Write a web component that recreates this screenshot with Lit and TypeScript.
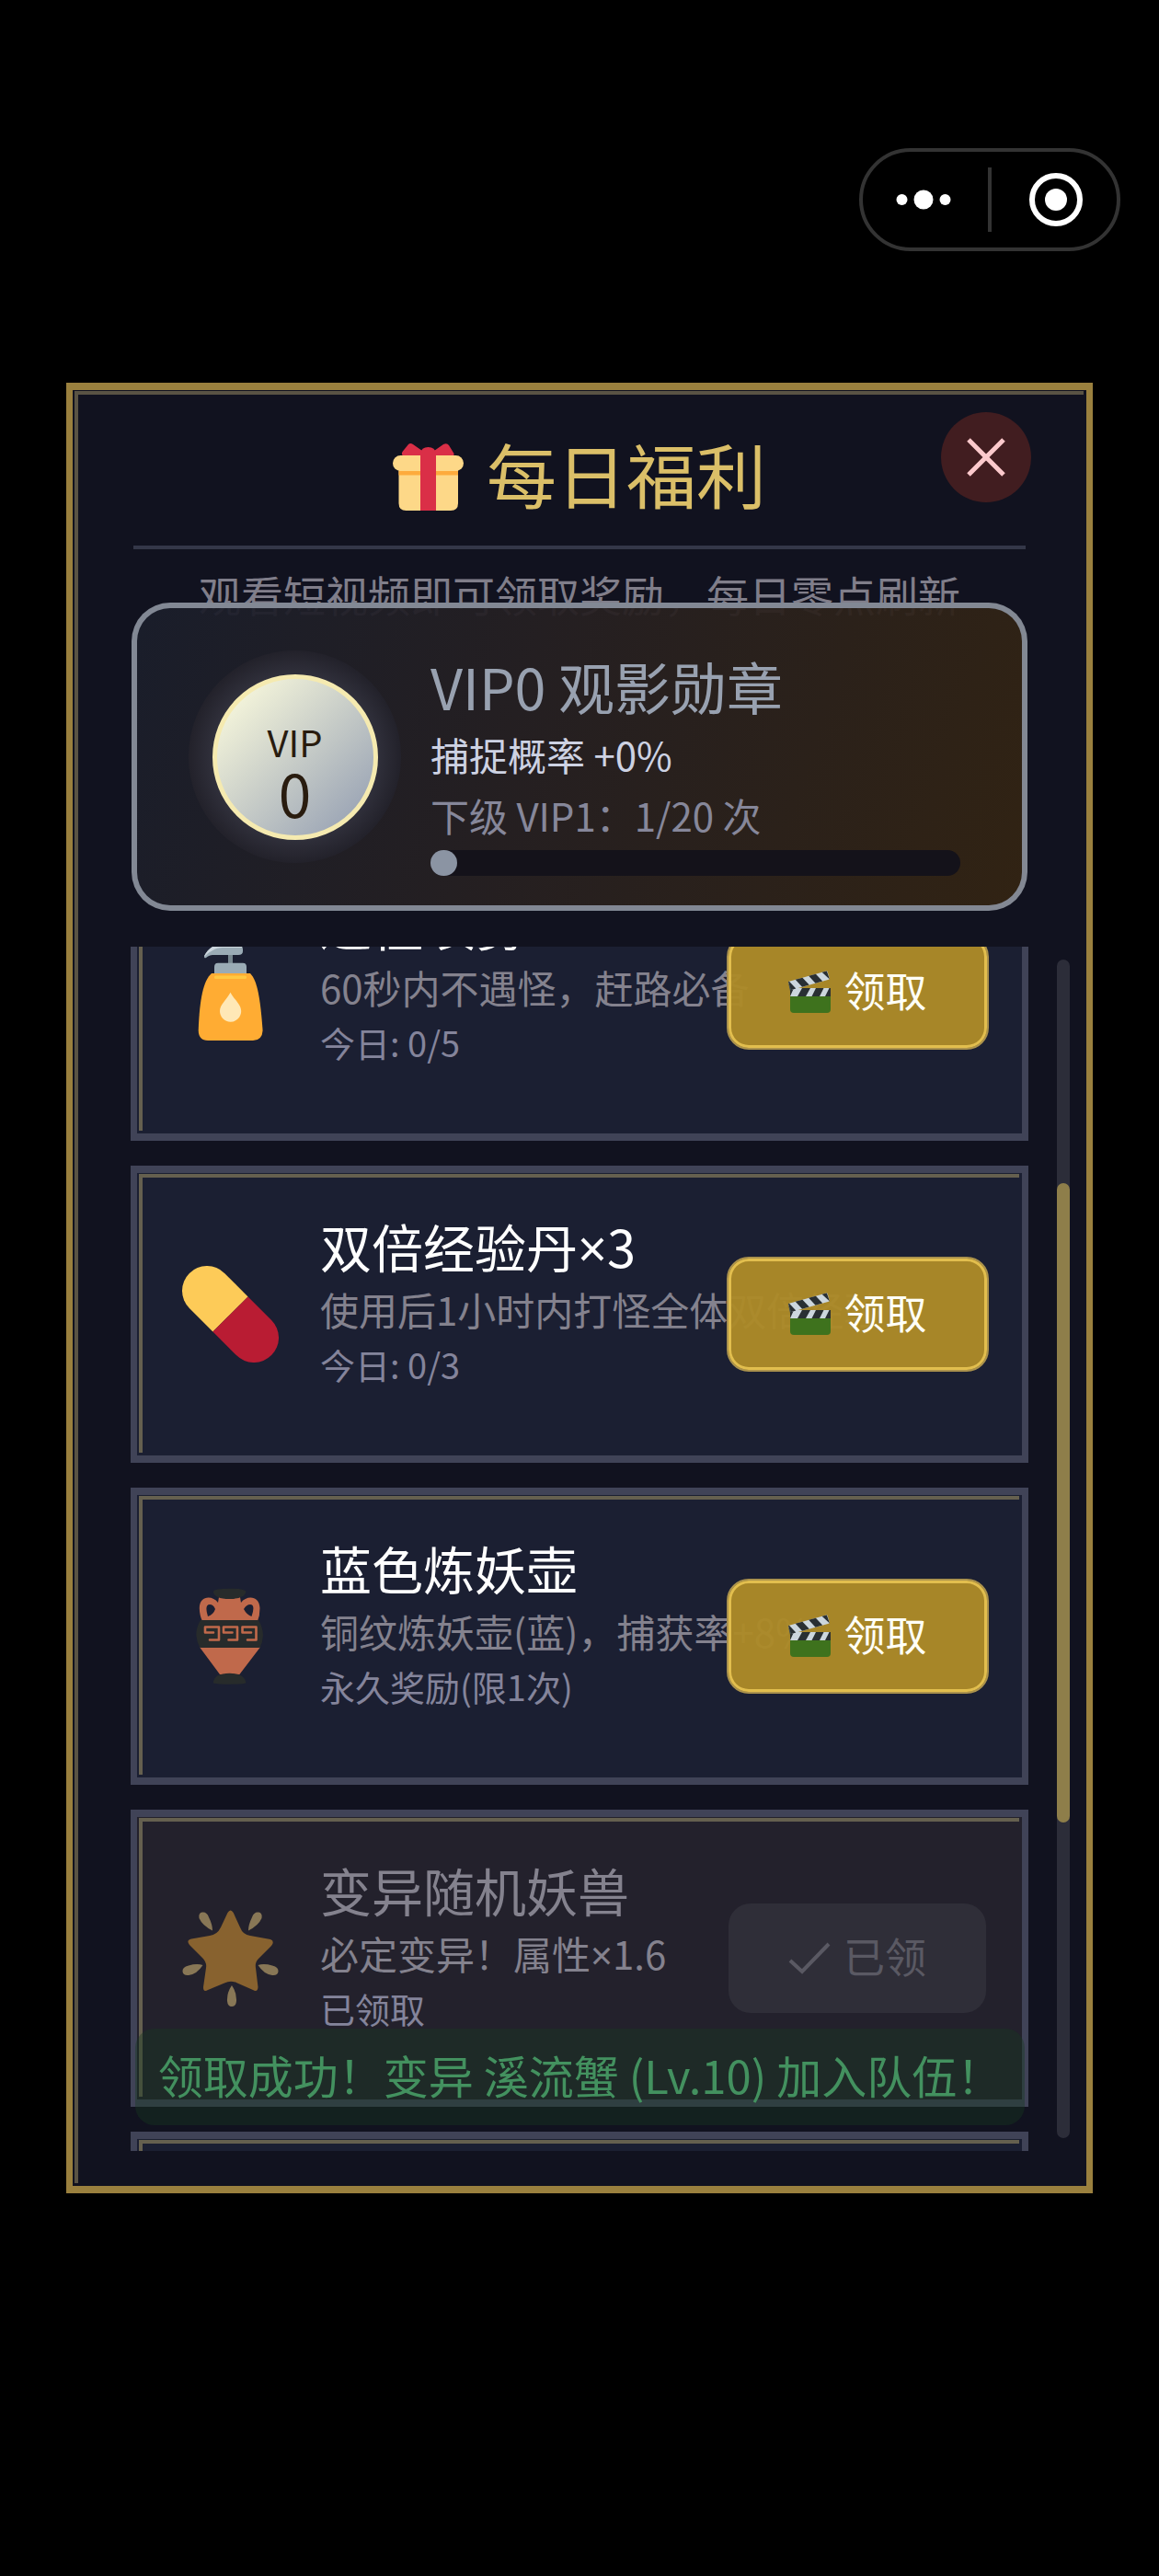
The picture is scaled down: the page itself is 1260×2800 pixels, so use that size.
import { LitElement, html, svg, css, nothing } from "lit";
import { customElement, state, query } from "lit/decorators.js";
import { classMap } from "lit/directives/class-map.js";
import { styleMap } from "lit/directives/style-map.js";

interface Reward {
  icon: unknown;
  name: string;
  desc: string;
  quota: string;
  claimed: boolean;
}

const giftIcon = html`<svg class="gift" viewBox="0 0 77 77" aria-hidden="true">
  <path d="M11 15 Q9 14 10.5 11 L17 3 Q19 1 22 3 L32 10 Q38.500 4 45 10 L55 3 Q59 1 61 4 L66.500 13 Q67 16 64 16 H12Z" fill="#da2f47" />
  <path d="M6.500 30 H71 V67 Q71 75 63 75 H14.500 Q6.500 75 6.500 67Z" fill="#fdd888" />
  <rect x="0" y="15" width="77" height="17" rx="8.500" fill="#fdd888" />
  <rect x="6.500" y="32" width="64.500" height="4.500" fill="#fdab3d" />
  <path d="M30 75 V13 Q31 6 38.500 6 Q46 6 47 13 V75Z" fill="#da2f47" />
</svg>`;

const clapIcon = html`<svg class="clap" viewBox="0 0 46 47" aria-hidden="true">
  <path d="M2 27 H46 V42 Q46 46 42 46 H6 Q2 46 2 42Z" fill="#3e721d" />
  <rect x="2" y="19" width="44" height="9" fill="#ccd6dd" />
  <path d="M2 19 H6 L2 28Z M15 19 H24 L19 28 H10Z M30 19 H38.500 L34 28 H25.500Z M44.500 19 H46 V28 H40Z" fill="#292f33" />
  <g transform="translate(0 12) rotate(-15.500)">
    <rect width="44" height="9.500" rx="1" fill="#ccd6dd" />
    <path d="M0 0 H1 L6 9.500 H0Z M8 0 H16 L21 9.500 H13Z M23 0 H31 L36 9.500 H28Z M38 0 H43.500 L44 9.500Z" fill="#292f33" />
  </g>
  <path d="M0 13 L3 20 L2 22Z" fill="#3b4a50" />
</svg>`;

const bottleArt = svg`
  <rect x="50" y="10" width="5" height="13" fill="#77878f" />
  <path d="M24 14 C28 5 35 0 45 0 H58 Q66 1 66 6 V8 Q66 12 61 12 H42 C35 12 30 11 26 15 Q24 16 24 14Z" fill="#9aabb5" />
  <path d="M24 13 C28 5 35 0 45 0 H58 Q64 1 65.500 4 H44 C36 4 29 9 24 14Z" fill="#ccd6dd" />
  <path d="M35 33 V25 Q35 20.700 39 20.700 H66 Q70 20.700 70 25 V33Z" fill="#9aabb5" />
  <path d="M32 32 H74 C82 40 85 60 87.600 94 Q87 105 77 105 H28 Q18 105 17.700 94 C19 60 23 40 32 32Z" fill="#ffac33" />
  <rect x="35" y="34.500" width="35" height="3.500" rx="1.500" fill="#ffc843" />
  <path d="M52.500 52.700 C57 61 64.200 66 64.200 73 A11.600 11.700 0 0 1 41 73 C41 66 48 61 52.500 52.700Z" fill="#ffe8b6" />`;

const pillArt = svg`
  <path d="M33.400 71.600 L7.900 46.100 A27 27 0 0 1 46.100 7.900 L71.600 33.400Z" fill="#fdcb58" />
  <path d="M71.600 33.400 L97.100 58.900 A27 27 0 0 1 58.900 97.100 L33.400 71.600Z" fill="#b91c33" />`;

const amphoraArt = svg`
  <path d="M40 10 H63 L64 16 C70 8 84 8 84.500 22 Q84.500 30 82 36 L84.500 65 L62.400 94 H41 L19.500 65 L22 36 Q19 30 18.800 22 C19 8 33 8 39 16Z" fill="#c0694b" />
  <path d="M28 31 Q24 18 30 18 Q34 18 36 23 Q34 29 28 31Z M75.500 31 Q80 18 74 18 Q70 18 67 23 Q70 29 75.500 31Z" fill="#1b1f32" />
  <path d="M33.800 4 Q35 .7 51.600 .7 Q68 .7 69.500 4 Q68 12 51.600 12 Q35 12 33.800 4Z" fill="#272b2b" />
  <path d="M20 35 H83 Q92 50 84.500 65 H19.500 Q11 50 20 35Z" fill="#272b2b" />
  <path d="M33.800 103 Q35 92.700 51.600 92.700 Q68 92.700 69.500 103 Q68 104.700 51.600 104.700 Q35 104.700 33.800 103Z" fill="#272b2b" />
  <g fill="none" stroke="#c0694b" stroke-width="2.600" stroke-linejoin="round" stroke-linecap="round">
    <path d="M30 56.500 H40 V42.500 H25 V48.500 H34" />
    <path d="M50.500 56.500 H60 V42.500 H45 V48.500 H54.500" />
    <path d="M71 56.500 H80.500 V42.500 H65.500 V48.500 H75" />
  </g>`;

const starArt = svg`
  <path d="M49.500 3 Q52.600 -2 55.700 3 L63 19 Q66 27 74 28 L96 32 Q101 34 97 39 L83 53 Q79 57 80 63 L82.500 84 Q82 90 77 87 L60 79.500 Q53 76 46 79.500 L28 87 Q23 90 23 84 L26 63 Q27 57 22 52 L8 38 Q4 33 10 31.500 L30 28 Q38 27 42 19Z" fill="#88622f" />
  <g fill="#887756">
    <path d="M33 22.500 Q22 17 18.500 9 Q17.500 3 22 2.500 Q27 2 29 8 Q33 16 33 22.500Z" />
    <path d="M72 22.500 Q83 17 86.500 9 Q87.500 3 83 2.500 Q78 2 76 8 Q72 16 72 22.500Z" />
    <path d="M22.500 60 Q16 70 7 71 Q1 71.500 .5 67 Q0 62 7 60.500 Q16 58 22.500 60Z" />
    <path d="M82.500 60 Q89 70 98 71 Q104 71.500 104.500 67 Q105 62 98 60.500 Q89 58 82.500 60Z" />
    <path d="M54 82 Q59.500 90 59 99 Q58.500 105 54 105 Q49.500 105 49 99 Q48.500 90 54 82Z" />
  </g>`;

@customElement("app-root")
export class AppRoot extends LitElement {
  static styles = css`
    :host {
      display: block;
      background: #000;
      font-family: "Noto Sans CJK SC", sans-serif;
    }
    * {
      box-sizing: border-box;
    }
    h1, h2, h3, p, ul {
      margin: 0;
      padding: 0;
      font-weight: 400;
      list-style: none;
    }
    button {
      margin: 0;
      padding: 0;
      border: 0;
      background: none;
      color: inherit;
      font: inherit;
      cursor: pointer;
    }
    svg {
      display: block;
    }
    .page {
      display: flex;
      flex-direction: column;
      height: 100vh;
      min-height: 1600px;
      padding: 161px 0 416px;
    }
    .capsule {
      display: flex;
      align-self: flex-end;
      align-items: center;
      margin-right: 42px;
      border: 4px solid #333;
      border-radius: 56px;
    }
    .capsule button {
      display: grid;
      place-items: center;
      width: 136px;
      height: 104px;
    }
    .capsule .more {
      padding-right: 4px;
    }
    .capsule .exit {
      padding-left: 4px;
    }
    .capsule .rule {
      width: 4px;
      height: 70px;
      background: #333;
    }
    .panel {
      position: relative;
      display: flex;
      flex: 1;
      flex-direction: column;
      min-height: 0;
      margin: 143px 72px 0;
      border: solid #9a803e;
      border-width: 8px 7px;
      background: #11121f;
    }
    .panel::before {
      content: "";
      position: absolute;
      inset: 1px 3px 3px 2px;
      border: solid #595344;
      border-width: 4px 0 0 4px;
      pointer-events: none;
    }
    .head {
      display: flex;
      align-items: center;
      justify-content: center;
      gap: 25px;
      margin: 0 66px;
      padding: 34px 0 15px;
      border-bottom: 4px solid #343748;
    }
    .gift {
      width: 77px;
      height: 77px;
    }
    .head h1 {
      color: #dbbf68;
      font-size: 76px;
      line-height: 112px;
      padding-bottom: 8px;
    }
    .close {
      position: absolute;
      top: 24px;
      right: 60px;
      display: grid;
      place-items: center;
      width: 98px;
      height: 98px;
      border-radius: 50%;
      background: #411d20;
    }
    .hint {
      margin-top: 18px;
      color: #807e8a;
      font-size: 46px;
      line-height: 60px;
      text-align: center;
      white-space: nowrap;
    }
    .vip {
      position: relative;
      display: flex;
      align-items: flex-start;
      gap: 32px;
      margin: -20px 64px 0;
      padding: 44px 67px 32px 56px;
      border: 6px solid rgba(134, 141, 153, 0.96);
      border-radius: 42px;
      background: linear-gradient(109deg, rgba(26, 30, 44, 0.94), rgba(38, 32, 34, 0.94) 45%, rgba(51, 36, 19, 0.94)) border-box;
    }
    .halo {
      display: grid;
      place-items: center;
      flex: none;
      width: 231px;
      height: 231px;
      margin-top: 2px;
      border-radius: 50%;
      background: radial-gradient(circle, #343440 50%, #23222b 70%);
    }
    .medal {
      display: flex;
      flex-direction: column;
      align-items: center;
      width: 180px;
      height: 180px;
      padding-top: 40px;
      border: 5px solid #f5eab0;
      border-radius: 50%;
      background: linear-gradient(135deg, #f8f8dc 8%, #98a2b4 92%);
      color: #291c0f;
    }
    .medal .word {
      font-size: 40px;
      line-height: 56px;
    }
    .medal .level {
      font-size: 64px;
      line-height: 54px;
    }
    .vip-text {
      flex: 1;
      min-width: 0;
      white-space: nowrap;
    }
    .vip-text h2 {
      color: #98a1b0;
      font-size: 61px;
      line-height: 82px;
    }
    .vip-text p {
      font-size: 42px;
      line-height: 66px;
    }
    .bonus {
      color: #cdd2e3;
    }
    .next {
      color: #86879a;
    }
    .bar {
      height: 28px;
      margin-top: 5px;
      border-radius: 14px;
      background: #14121a;
    }
    .bar-fill {
      min-width: 28px;
      height: 28px;
      border-radius: 14px;
      background: #8b94a3;
    }
    .body {
      display: flex;
      flex: 1;
      gap: 31px;
      min-height: 0;
      margin-top: 39px;
      padding: 0 18px 38px 63px;
    }
    .list {
      display: flex;
      flex: 1;
      flex-direction: column;
      gap: 27px;
      min-width: 0;
      overflow-x: hidden;
      overflow-y: auto;
      scrollbar-width: none;
    }
    .card {
      position: relative;
      display: flex;
      flex: none;
      align-items: center;
      min-height: 323px;
      padding: 0 36px 0 49px;
      border: solid #404357;
      border-width: 8px 7px;
      background: #1b1f32;
    }
    .card::before {
      content: "";
      position: absolute;
      inset: 1px 3px 3px 2px;
      border: solid #65604f;
      border-width: 4px 0 0 4px;
      pointer-events: none;
    }
    .card.claimed {
      background: #23212c;
    }
    .icon {
      flex: none;
      width: 105px;
      height: 105px;
      margin-right: 45px;
    }
    .info {
      flex: 1;
      min-width: 0;
      padding: 41px 0 70px;
      white-space: nowrap;
    }
    .info h3 {
      color: #fff;
      font-size: 56px;
      line-height: 76px;
    }
    .desc {
      color: #84828e;
      font-size: 42px;
      line-height: 62px;
    }
    .quota {
      color: #84849b;
      font-size: 38px;
      line-height: 58px;
    }
    .claimed h3 {
      color: #84828e;
    }
    .times {
      font-family: "Noto Sans", sans-serif;
      line-height: 1;
    }
    .claim {
      position: relative;
      display: flex;
      flex: none;
      align-items: center;
      justify-content: center;
      gap: 14px;
      width: 285px;
      height: 125px;
      border: 2px solid #ab924c;
      border-radius: 24px;
      background: rgba(173, 138, 40, 0.96);
      box-shadow: inset 0 0 0 3px #e2be4e;
      color: #fffff6;
      font-size: 45px;
      line-height: 60px;
    }
    .claim .label {
      margin-bottom: 5px;
    }
    .claim:disabled {
      width: 280px;
      height: 119px;
      margin-right: 3px;
      border: 0;
      background: #2f2e38;
      box-shadow: none;
      color: #5a5963;
    }
    .clap {
      width: 46px;
      height: 47px;
    }
    .track {
      position: relative;
      flex: none;
      width: 14px;
      margin: 14px 0;
      border-radius: 7px;
      background: #2c2d39;
    }
    .thumb {
      position: absolute;
      left: 0;
      right: 0;
      border-radius: 7px;
      background: #8e7e4a;
    }
    .toast {
      position: absolute;
      right: 67px;
      bottom: 66px;
      left: 68px;
      padding: 18px 0 23px;
      border-radius: 21px;
      background: rgba(22, 58, 33, 0.4);
      color: #43915f;
      font-size: 49px;
      line-height: 64px;
      text-align: center;
      white-space: nowrap;
    }
  `;

  @state() private watched = 1;
  @state() private thumb = { top: 0.19, size: 0.542 };
  @query(".list") private list!: HTMLElement;

  private readonly rewards: Reward[] = [
    { icon: bottleArt, name: "避怪喷雾×3", desc: "60秒内不遇怪，赶路必备", quota: "今日: 0/5", claimed: false },
    { icon: pillArt, name: "双倍经验丹×3", desc: "使用后1小时内打怪全体双倍经验", quota: "今日: 0/3", claimed: false },
    { icon: amphoraArt, name: "蓝色炼妖壶", desc: "铜纹炼妖壶(蓝)，捕获率+8%", quota: "永久奖励(限1次)", claimed: false },
    { icon: starArt, name: "变异随机妖兽", desc: "必定变异！属性×1.6", quota: "已领取", claimed: true },
  ];

  protected firstUpdated() {
    this.list.scrollTop = 112;
  }

  /** Sets the multiplication sign in a Latin face, where it is not a full em wide. */
  private withTimes(text: string) {
    const [before, after] = text.split("×");
    return after === undefined ? before : html`${before}<span class="times">×</span>${after}`;
  }

  private renderCard(r: Reward) {
    return html`<li class=${classMap({ card: true, claimed: r.claimed })}>
      <svg class="icon" viewBox="0 0 105 105" aria-hidden="true">${r.icon}</svg>
      <div class="info">
        <h3>${this.withTimes(r.name)}</h3>
        <p class="desc">${this.withTimes(r.desc)}</p>
        <p class="quota">${r.quota}</p>
      </div>
      <button class="claim" type="button" ?disabled=${r.claimed}>
        ${r.claimed
          ? html`<svg class="clap" viewBox="0 0 46 47" aria-hidden="true">
              <path d="M2 26 L15 38 L44 8" fill="none" stroke="#5a5963" stroke-width="4" />
            </svg>`
          : clapIcon}
        <span class="label">${r.claimed ? "已领" : "领取"}</span>
      </button>
    </li>`;
  }

  render() {
    const goal = 20;
    return html`<main class="page" lang="zh-CN">
      <div class="capsule">
        <button class="more" type="button" aria-label="更多">
          <svg width="60" height="24" viewBox="0 0 60 24" fill="#fff">
            <circle cx="6.500" cy="12" r="6" />
            <circle cx="30" cy="12" r="10.500" />
            <circle cx="53.500" cy="12" r="6" />
          </svg>
        </button>
        <span class="rule"></span>
        <button class="exit" type="button" aria-label="关闭小程序">
          <svg width="60" height="60" viewBox="0 0 60 60">
            <circle cx="30" cy="30" r="26" fill="none" stroke="#fff" stroke-width="6" />
            <circle cx="30" cy="30" r="12" fill="#fff" />
          </svg>
        </button>
      </div>

      <section class="panel">
        <header class="head">
          ${giftIcon}
          <h1>每日福利</h1>
        </header>
        <button class="close" type="button" aria-label="关闭">
          <svg width="44" height="44" viewBox="0 0 44 44">
            <path d="M3 3 L41 41 M41 3 L3 41" stroke="#fcc9cc" stroke-width="5" />
          </svg>
        </button>
        <p class="hint">观看短视频即可领取奖励，每日零点刷新</p>

        <section class="vip">
          <div class="halo">
            <div class="medal">
              <span class="word">VIP</span>
              <span class="level">0</span>
            </div>
          </div>
          <div class="vip-text">
            <h2>VIP0 观影勋章</h2>
            <p class="bonus">捕捉概率 +0%</p>
            <p class="next">下级 VIP1：${this.watched}/${goal} 次</p>
            <div class="bar" role="progressbar" aria-valuenow=${this.watched} aria-valuemin="0" aria-valuemax=${goal}>
              <div class="bar-fill" style=${styleMap({ width: `${(this.watched / goal) * 100}%` })}></div>
            </div>
          </div>
        </section>

        <div class="body">
          <ul class="list">
            ${this.rewards.map((r) => this.renderCard(r))}
            <li class="card">${nothing}</li>
          </ul>
          <div class="track">
            <div
              class="thumb"
              style=${styleMap({ top: `${this.thumb.top * 100}%`, height: `${this.thumb.size * 100}%` })}
            ></div>
          </div>
        </div>

        <div class="toast" role="status">领取成功！变异 溪流蟹 (Lv.10) 加入队伍！</div>
      </section>
    </main>`;
  }
}
